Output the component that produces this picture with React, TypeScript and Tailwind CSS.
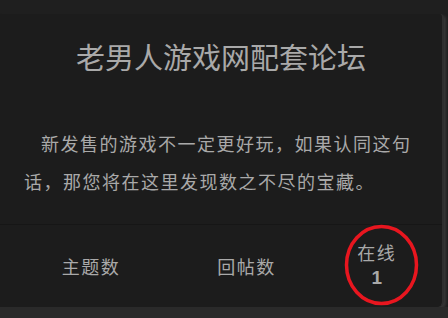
import React from "react";

export default function App() {
  const cjk = { fontFamily: '"Microsoft YaHei", "Noto Sans CJK SC", sans-serif' };
  return (
    <div className="relative w-[448px] h-[318px] overflow-hidden bg-[#1f1f1f]" style={cjk}>
      <div className="mt-[14px] w-[444px] h-[293px] bg-[#1c1c1c] rounded-tr-[4px] rounded-br-[6px] border-r-[2px] border-[#2e2e2e] shadow-[2px_2px_3px_rgba(80,80,80,0.5)] flex flex-col">
        <h1 className="pt-[23px] text-center text-[29px] leading-[38px] text-[#a9a9a9] font-normal">
          老男人游戏网配套论坛
        </h1>
        <p className="mt-[49px] px-[24px] text-[18px] leading-[38px] tracking-[1.5px] text-[#a9a9a9] indent-[17px]">
          新发售的游戏不一定更好玩，如果认同这句话，那您将在这里发现数之不尽的宝藏。
        </p>
        <div className="mt-[24px] border-t border-[#161616] flex-1 flex items-center text-[18px] tracking-[1.5px] text-[#a9a9a9]">
          <div className="w-[182px] text-center pl-[1px]">主题数</div>
          <div className="w-[131px] text-center">回帖数</div>
          <div className="w-[131px] text-center flex flex-col items-center -mt-[2px]">
            <span className="leading-[26px]">在线</span>
            <span className="leading-[26px] text-[19px] font-bold tracking-normal" style={{ fontFamily: '"Liberation Sans", Arial, sans-serif' }}>1</span>
          </div>
        </div>
      </div>
      <div className="absolute left-0 bottom-0 w-full h-[11px] bg-[#2a2a2a]" />
      <svg className="absolute left-[343px] top-[224px]" width="80" height="84" viewBox="0 0 80 84">
        <ellipse cx="38.5" cy="41" rx="35" ry="38.5" fill="none" stroke="#e8161f" strokeWidth="3.5" />
      </svg>
    </div>
  );
}
